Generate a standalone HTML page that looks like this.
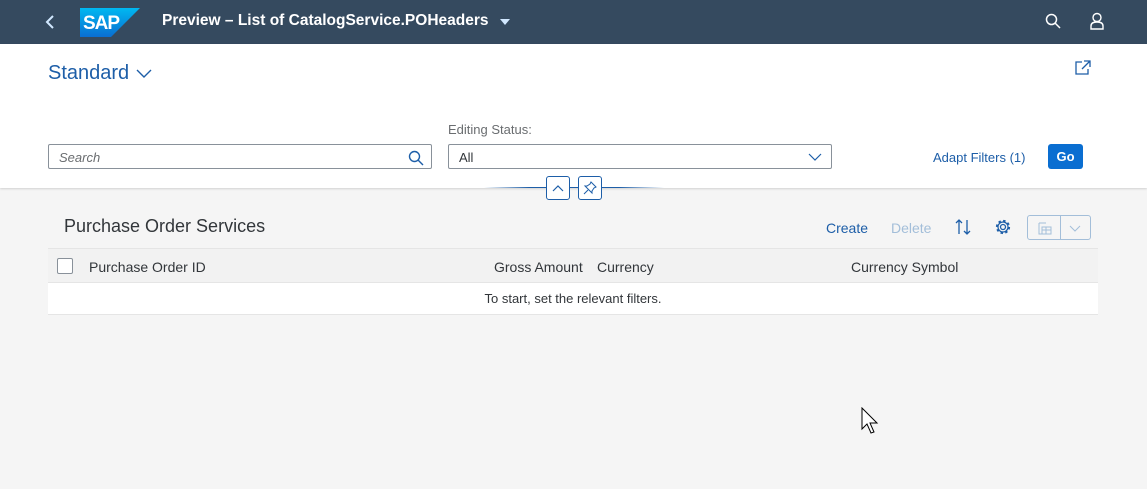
<!DOCTYPE html><html><head><style>
*{box-sizing:border-box;margin:0;padding:0}
body{width:1147px;height:489px;overflow:hidden;background:#f5f5f5;font-family:"Liberation Sans",Arial,sans-serif;position:relative}
.abs{position:absolute}
.shell{left:0;top:0;width:1147px;height:44px;background:#354a5f}
.hdr{left:0;top:44px;width:1147px;height:144px;background:#fff;box-shadow:0 1px 2px rgba(0,0,0,.15)}
.inp{height:25px;border:1px solid #89919a;border-radius:2px;background:#fff;font-size:13px;color:#32363a;padding:5px 10px}
</style></head><body>
<div class="abs shell">
<svg class="abs" style="left:44px;top:14px" width="12" height="16"><path d="M9 2 L3 8 L9 14" stroke="#d1e8ff" stroke-width="2" fill="none"/></svg>
<svg class="abs" style="left:80px;top:8px" width="60" height="29"><defs><linearGradient id="g" x1="0" y1="0" x2="0" y2="1"><stop offset="0" stop-color="#00b8f1"/><stop offset="1" stop-color="#0a6ed1"/></linearGradient></defs><path d="M0 0H60L31 29H0Z" fill="url(#g)"/><text x="3" y="21" font-family="Liberation Sans" font-weight="bold" font-size="19" fill="#fff" letter-spacing="-1">SAP</text></svg>
<div class="abs" style="left:162px;top:12px;color:#fff;font-weight:bold;font-size:15.5px">Preview – List of CatalogService.POHeaders</div>
<svg class="abs" style="left:499px;top:18px" width="12" height="8"><path d="M1 1H11L6 7Z" fill="#d1e8ff"/></svg>
<svg class="abs" style="left:1045px;top:13px" width="16" height="16"><circle cx="6.5" cy="6.5" r="5" stroke="#fff" stroke-width="1.5" fill="none"/><path d="M10 10L15 15" stroke="#fff" stroke-width="1.5"/></svg>
<svg class="abs" style="left:1089px;top:12px" width="16" height="18"><circle cx="8" cy="5.5" r="4" stroke="#fff" stroke-width="1.4" fill="none"/><path d="M2 17V14Q2 10 8 10Q14 10 14 14V17Z" stroke="#fff" stroke-width="1.4" fill="none"/></svg>
</div>
<div class="abs hdr">
<div class="abs" style="left:48px;top:18px;font-size:20px;color:#1d5ea8">Standard</div>
<svg class="abs" style="left:136px;top:25px" width="16" height="10"><path d="M1 1L8 8L15 1" stroke="#1d5ea8" stroke-width="1.4" fill="none"/></svg>
<svg class="abs" style="left:1074px;top:15px" width="18" height="17"><path d="M8 3H2V15H14V10M10 2H16V8M16 2L8 10" stroke="#1d5ea8" stroke-width="1.3" fill="none"/></svg>
<div class="abs" style="left:448px;top:78px;font-size:13px;color:#6a6d70">Editing Status:</div>
<div class="abs inp" style="left:48px;top:100px;width:384px;font-style:italic;color:#6a6d70">Search</div>
<svg class="abs" style="left:408px;top:106px" width="16" height="16"><circle cx="6.5" cy="6.5" r="5" stroke="#1d5ea8" stroke-width="1.4" fill="none"/><path d="M10 10L15 15" stroke="#1d5ea8" stroke-width="1.4"/></svg>
<div class="abs inp" style="left:448px;top:100px;width:384px">All</div>
<svg class="abs" style="left:808px;top:109px" width="14" height="8"><path d="M1 1L7 7L13 1" stroke="#1d5ea8" stroke-width="1.2" fill="none"/></svg>
<div class="abs" style="left:933px;top:106px;font-size:13px;color:#1d5ea8">Adapt Filters (1)</div>
<div class="abs" style="left:1048px;top:100px;width:35px;height:25px;background:#0a6ed1;border-radius:3px;color:#fff;font-weight:bold;font-size:13px;text-align:center;line-height:25px">Go</div>
</div>
<div class="abs" style="left:484px;top:187px;width:180px;height:1px;background:linear-gradient(90deg,transparent,#1d5ea8 25%,#1d5ea8 75%,transparent)"></div>
<div class="abs" style="left:546px;top:176px;width:24px;height:24px;border:1px solid #1d5ea8;border-radius:3px;background:#fff"><svg width="22" height="22"><path d="M6 14L11 9L16 14" stroke="#1d5ea8" stroke-width="1.2" fill="none"/></svg></div>
<div class="abs" style="left:578px;top:176px;width:24px;height:24px;border:1px solid #1d5ea8;border-radius:3px;background:#fff"><svg width="22" height="22"><path d="M5 17L9 13M12 5L17 10L15 11L13 14L13 16L6 9L8 9L11 7Z" stroke="#1d5ea8" stroke-width="1" fill="none"/></svg></div>
<div class="abs" style="left:64px;top:216px;font-size:18px;color:#32363a">Purchase Order Services</div>
<div class="abs" style="left:826px;top:220px;font-size:14px;color:#1d5ea8">Create</div>
<div class="abs" style="left:891px;top:220px;font-size:14px;color:#a3bed9">Delete</div>
<svg class="abs" style="left:954px;top:218px" width="18" height="18"><path d="M5 16V2M2 5L5 2L8 5M13 2V16M10 13L13 16L16 13" stroke="#1d5ea8" stroke-width="1.3" fill="none"/></svg>
<svg class="abs" style="left:994px;top:218px" width="18" height="18"><circle cx="9" cy="9" r="2.5" stroke="#1d5ea8" stroke-width="1.3" fill="none"/><circle cx="9" cy="9" r="6" stroke="#1d5ea8" stroke-width="2.2" stroke-dasharray="2.4 2.3" fill="none"/><circle cx="9" cy="9" r="5" stroke="#1d5ea8" stroke-width="1.2" fill="none"/></svg>
<div class="abs" style="left:1027px;top:215px;width:64px;height:25px;border:1px solid #a3bed9;border-radius:3px"><div class="abs" style="left:32px;top:0;width:1px;height:23px;background:#a3bed9"></div>
<svg class="abs" style="left:8px;top:4px" width="18" height="16"><path d="M3 3H10M3 3V14H15V7H6V14M6 10H15M10 7V14" stroke="#a3bed9" stroke-width="1" fill="none"/></svg>
<svg class="abs" style="left:41px;top:9px" width="12" height="8"><path d="M1 1L6 6L11 1" stroke="#a3bed9" stroke-width="1" fill="none"/></svg></div>
<div class="abs" style="left:48px;top:248px;width:1050px;height:35px;background:#f2f2f2;border-top:1px solid #e5e5e5;border-bottom:1px solid #e5e5e5"></div>
<div class="abs" style="left:57px;top:258px;width:16px;height:16px;border:1px solid #89919a;border-radius:2px;background:#fff"></div>
<div class="abs" style="left:89px;top:259px;font-size:14px;color:#32363a">Purchase Order ID</div>
<div class="abs" style="left:494px;top:259px;font-size:14px;color:#32363a">Gross Amount</div>
<div class="abs" style="left:597px;top:259px;font-size:14px;color:#32363a">Currency</div>
<div class="abs" style="left:851px;top:259px;font-size:14px;color:#32363a">Currency Symbol</div>
<div class="abs" style="left:48px;top:283px;width:1050px;height:32px;background:#fff;border-bottom:1px solid #e5e5e5;text-align:center;font-size:13px;line-height:31px;color:#32363a">To start, set the relevant filters.</div>
<svg class="abs" style="left:861px;top:407px" width="20" height="28"><path d="M1 1V22L6 17L10 26L13 25L9 16H16Z" fill="#fff" stroke="#000" stroke-width="1"/></svg>
</body></html>
